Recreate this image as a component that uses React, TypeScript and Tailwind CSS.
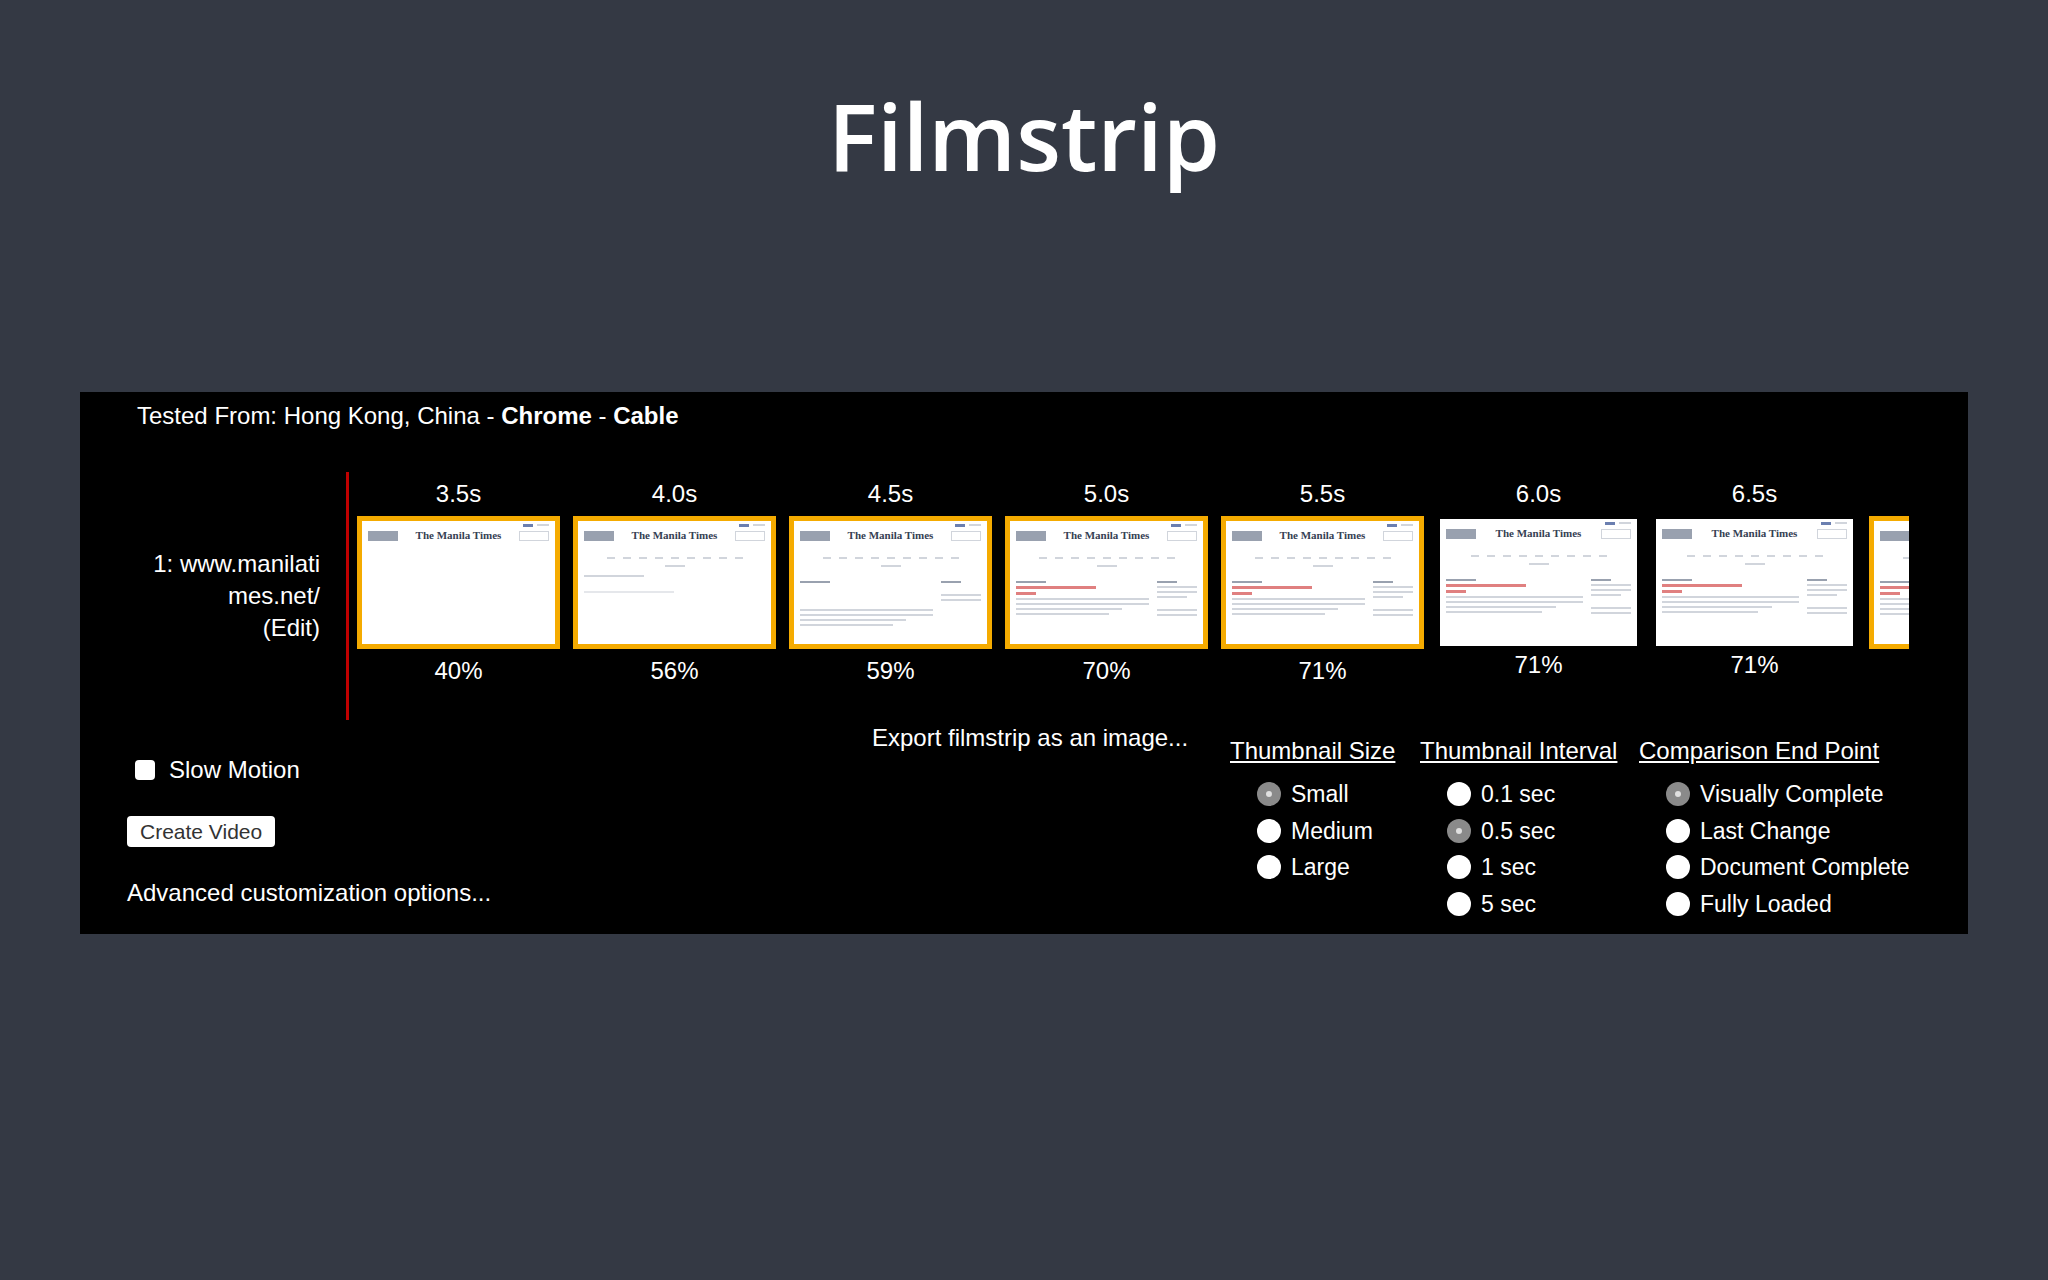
import React from "react";

const font = { fontFamily: '"Liberation Sans", Arial, sans-serif' };

function Thumb({ stage, border, w }: { stage: number; border: boolean; w: number }) {
  return (
    <div
      className={`shrink-0 overflow-hidden bg-white ${border ? "border-[5px] border-[#f5ab00]" : "border-[3px] border-black"}`}
      style={{ width: w, height: 133 }}
    >
      <div className="flex h-full flex-col px-[6px] pt-[2px]">
        <div className="flex h-[4px] items-center justify-end gap-1">
          <div className="h-[3px] w-[10px] bg-[#6b7fb0]" />
          <div className="h-[2px] w-[12px] bg-gray-300" />
        </div>
        <div className="mt-[3px] flex items-center gap-2">
          <div className="h-[10px] w-[30px] bg-gray-400" />
          <div className="flex-1 text-center text-[11px] leading-none text-gray-700" style={{ fontFamily: '"Liberation Serif", serif', fontWeight: 700 }}>
            The Manila Times
          </div>
          <div className="h-[10px] w-[30px] border border-gray-300" />
        </div>
        {stage >= 1 && (
          <div className="mt-[16px] flex justify-center gap-[8px]">
            {Array.from({ length: 9 }).map((_, i) => (
              <div key={i} className="h-[2px] w-[8px] bg-gray-300" />
            ))}
          </div>
        )}
        {stage >= 1 && <div className="mx-auto mt-[6px] h-[2px] w-[20px] bg-gray-300" />}
        {stage === 1 && (
          <>
            <div className="mt-[8px] h-[2px] w-[60px] bg-gray-300" />
            <div className="mt-[14px] h-[2px] w-[90px] bg-gray-200" />
          </>
        )}
        {stage >= 2 && (
          <div className="mt-[14px] flex gap-2">
            <div className="flex flex-1 flex-col gap-[3px]">
              <div className="h-[2px] w-[30px] bg-gray-400" />
              {stage >= 3 && <div className="h-[3px] w-[80px] bg-[#e08080]" />}
              {stage >= 3 && <div className="h-[3px] w-[20px] bg-[#e08080]" />}
              {stage === 2 && <div className="mt-[20px]" />}
              <div className="h-[2px] w-full bg-gray-300" />
              <div className="h-[2px] w-full bg-gray-300" />
              <div className="h-[2px] w-[80%] bg-gray-300" />
              <div className="h-[2px] w-[70%] bg-gray-300" />
            </div>
            <div className="flex w-[40px] flex-col gap-[3px]">
              <div className="h-[2px] w-[20px] bg-gray-400" />
              {stage >= 3 && (
                <>
                  <div className="h-[2px] w-full bg-gray-300" />
                  <div className="h-[2px] w-full bg-gray-300" />
                  <div className="h-[2px] w-[30px] bg-gray-300" />
                </>
              )}
              <div className="mt-[8px] h-[2px] w-full bg-gray-300" />
              <div className="h-[2px] w-full bg-gray-300" />
            </div>
          </div>
        )}
      </div>
    </div>
  );
}

function Radio({ checked, label }: { checked?: boolean; label: string }) {
  return (
    <div className="flex h-[36.5px] items-center gap-[10px]">
      {checked ? (
        <span className="flex h-[24px] w-[24px] shrink-0 items-center justify-center rounded-full bg-[#8a8a8a]">
          <span className="h-[6px] w-[6px] rounded-full bg-[#e0e0e0]" />
        </span>
      ) : (
        <span className="h-[24px] w-[24px] shrink-0 rounded-full bg-white" />
      )}
      <span className="whitespace-nowrap text-[23px] text-white">{label}</span>
    </div>
  );
}

export default function App() {
  const frames = [
    { t: "3.5s", p: "40%", s: 0, b: true },
    { t: "4.0s", p: "56%", s: 1, b: true },
    { t: "4.5s", p: "59%", s: 2, b: true },
    { t: "5.0s", p: "70%", s: 3, b: true },
    { t: "5.5s", p: "71%", s: 3, b: true },
    { t: "6.0s", p: "71%", s: 3, b: false },
    { t: "6.5s", p: "71%", s: 3, b: false },
  ];
  return (
    <div className="flex h-[1280px] w-[2048px] flex-col items-center bg-[#343944]">
      <h1 className="mt-[90px] text-[92px] font-semibold leading-none text-white" style={{ fontFamily: '"Open Sans", sans-serif' }}>
        Filmstrip
      </h1>
      <div className="mt-[210px] h-[542px] w-[1888px] overflow-hidden bg-black text-white" style={font}>
        <div className="pl-[57px] pt-[6px] text-[24px]">
          Tested From: Hong Kong, China - <b>Chrome</b> - <b>Cable</b>
        </div>
        <div className="mt-[38px] flex">
          <div className="flex w-[240px] flex-col justify-center text-right text-[24px] leading-[32px]">
            <span>1: www.manilati</span>
            <span>mes.net/</span>
            <span>(Edit)</span>
          </div>
          <div className="ml-[26px] h-[248px] w-[3px] bg-[#c00000]" />
          <div className="ml-[8px] flex w-[1552px] gap-[13px] overflow-hidden pt-[4px]">
            {frames.map((f, i) => (
              <div key={i} className="flex shrink-0 flex-col items-center">
                <div className="h-[36px] text-[24px] leading-[36px]">{f.t}</div>
                <div className="mt-[4px]">
                  <Thumb stage={f.s} border={f.b} w={203} />
                </div>
                <div className={`${f.b ? "mt-[4px]" : "-mt-[2px]"} text-[24px] leading-[36px]`}>{f.p}</div>
              </div>
            ))}
            <div className="flex shrink-0 flex-col">
              <div className="h-[36px]" />
              <div className="mt-[4px]">
                <Thumb stage={3} border={true} w={203} />
              </div>
            </div>
          </div>
        </div>
        <div className="flex">
          <div className="w-[560px] shrink-0 pl-[47px]">
            <div className="mt-[32px] flex items-center gap-[14px] pl-[8px]">
              <span className="h-[20px] w-[20px] rounded-[4px] bg-white" />
              <span className="text-[24px]">Slow Motion</span>
            </div>
            <button className="mt-[28px] h-[31px] rounded-[4px] bg-white px-[13px] text-[21px] leading-[31px] text-[#333]">Create Video</button>
            <div className="mt-[28px] text-[24px]">Advanced customization options...</div>
          </div>
          <div className="w-[590px] shrink-0 pl-[232px] text-[24px] whitespace-nowrap">Export filmstrip as an image...</div>
          <div className="mt-[13px] flex">
            <div className="w-[190px] shrink-0">
              <div className="whitespace-nowrap text-[24px] underline">Thumbnail Size</div>
              <div className="mt-[7px] pl-[27px]">
                <Radio checked label="Small" />
                <Radio label="Medium" />
                <Radio label="Large" />
              </div>
            </div>
            <div className="w-[219px] shrink-0">
              <div className="whitespace-nowrap text-[24px] underline">Thumbnail Interval</div>
              <div className="mt-[7px] pl-[27px]">
                <Radio label="0.1 sec" />
                <Radio checked label="0.5 sec" />
                <Radio label="1 sec" />
                <Radio label="5 sec" />
              </div>
            </div>
            <div className="shrink-0">
              <div className="whitespace-nowrap text-[24px] underline">Comparison End Point</div>
              <div className="mt-[7px] pl-[27px]">
                <Radio checked label="Visually Complete" />
                <Radio label="Last Change" />
                <Radio label="Document Complete" />
                <Radio label="Fully Loaded" />
              </div>
            </div>
          </div>
        </div>
      </div>
    </div>
  );
}
